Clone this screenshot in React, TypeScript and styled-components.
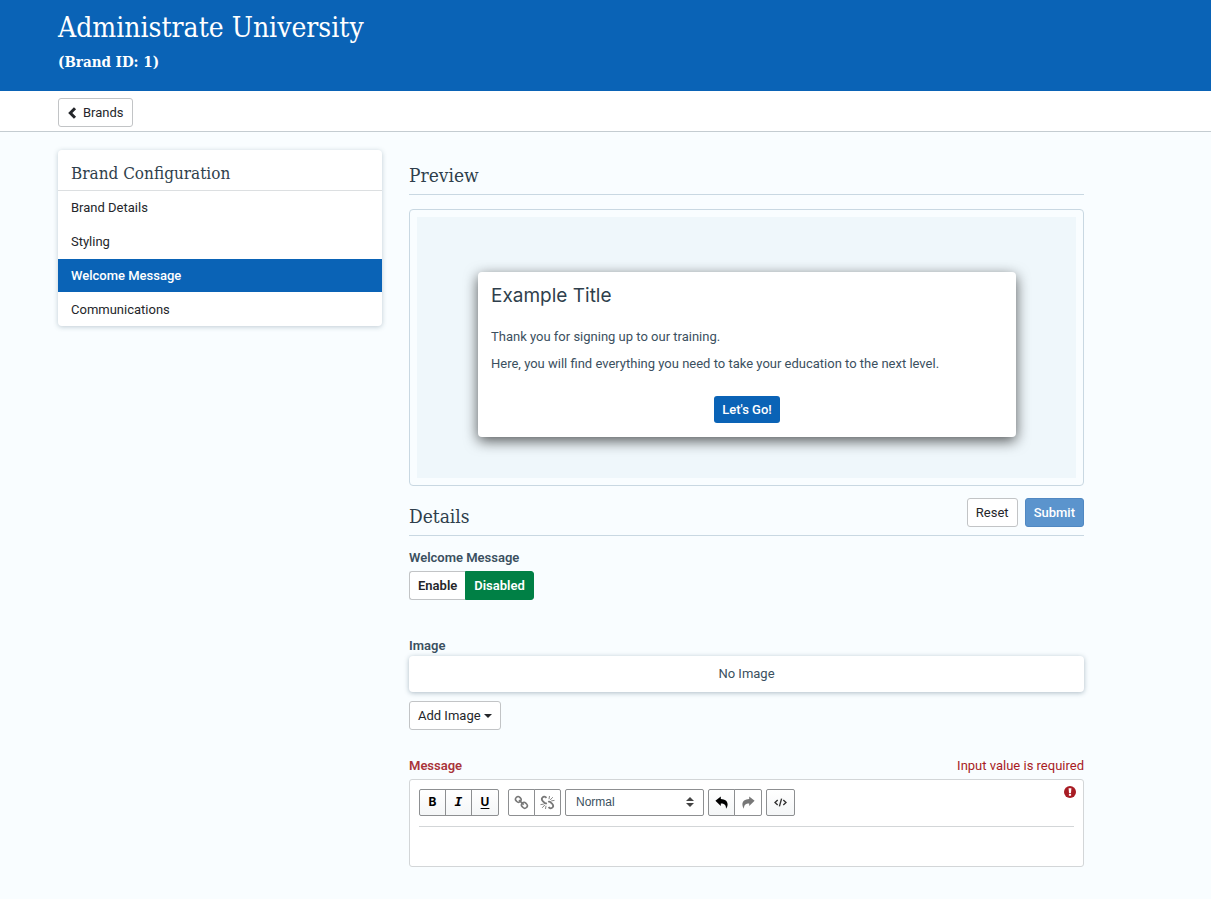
import React, { useState } from "react";
import styled, { createGlobalStyle, css } from "styled-components";

const color = {
  blue: "#0a63b6",
  page: "#f9fdff",
  ink: "#24262a",
  heading: "#2f3f4c",
  text: "#3b5060",
  rule: "#c9d8e2",
  border: "#c2c4c6",
  green: "#008045",
  error: "#a81c24",
};
const sans = `Roboto, "Liberation Sans", sans-serif`;
const slab = `"Roboto Slab", "DejaVu Serif Condensed", "DejaVu Serif", serif`;

const GlobalStyle = createGlobalStyle`
  *, *::before, *::after { box-sizing: border-box; }
  body {
    margin: 0;
    background: ${color.page};
    color: ${color.text};
    font: 13px/20px ${sans};
  }
  h1, h2, h3, p, ul { margin: 0; padding: 0; }
  button, select, textarea { font: inherit; margin: 0; }
`;

const Header = styled.header`
  background: ${color.blue};
  color: #fff;
  padding: 9px 58px 14px;
  font-family: ${slab};
`;
const Title = styled.h1`
  font-size: 28px;
  line-height: 38px;
  font-weight: 300;
`;
const Subtitle = styled.p`
  font-size: 15px;
  line-height: 30px;
  font-weight: 600;
`;
const Crumbs = styled.nav`
  display: flex;
  background: #fff;
  border-bottom: 1px solid #c4ccd1;
  padding: 7px 58px 4px;
`;
const controlLook = css`
  display: inline-flex;
  align-items: center;
  height: 29px;
  padding: 0 8px;
  border: 1px solid ${color.border};
  border-radius: 3px;
  background: #fff;
  color: ${color.ink};
  font-size: 13px;
  cursor: pointer;
`;
const BackLink = styled.a`
  ${controlLook}
  gap: 6px;
  text-decoration: none;
`;
const Button = styled.button<{ $primary?: boolean }>`
  ${controlLook}
  gap: 3px;
  ${(p) =>
    p.$primary &&
    css`
      background: #5b94cd;
      border-color: #5088c2;
      color: #fff;
      font-weight: 500;
    `}
`;
const Layout = styled.main`
  display: grid;
  grid-template-columns: 12fr 25fr;
  gap: 27px;
  align-items: start;
  padding: 18px 127px 32px 58px;
`;
const Sidebar = styled.aside`
  background: #fff;
  border-radius: 4px;
  overflow: hidden;
  box-shadow: 0 1px 5px rgba(60, 90, 110, 0.3);
`;
const SidebarTitle = styled.h2`
  padding: 10px 13px 4px;
  border-bottom: 1px solid #dcdfe1;
  font: 300 17px/26px ${slab};
  color: ${color.heading};
`;
const MenuList = styled.ul`
  display: grid;
  gap: 1px;
  list-style: none;
`;
const MenuLink = styled.a<{ $active?: boolean }>`
  display: block;
  padding: 0 13px;
  line-height: 33px;
  text-decoration: none;
  color: ${(p) => (p.$active ? "#fff" : color.ink)};
  background: ${(p) => (p.$active ? color.blue : "transparent")};
  font-weight: ${(p) => (p.$active ? 500 : 400)};
`;
const Content = styled.div`
  min-width: 0;
`;
const SectionHead = styled.div`
  display: flex;
  justify-content: space-between;
  align-items: flex-start;
  height: 38px;
  border-bottom: 1px solid ${color.rule};
`;
const PreviewHead = styled(SectionHead)`
  margin: 7px 0 14px;
`;
const SectionTitle = styled.h2`
  font: 300 19px/36px ${slab};
  color: ${color.heading};
`;
const Actions = styled.div`
  display: flex;
  gap: 7px;
`;
const PreviewFrame = styled.section`
  border: 1px solid ${color.rule};
  border-radius: 4px;
  padding: 7px;
  margin-bottom: 12px;
`;
const PreviewStage = styled.div`
  background: #eff7fb;
  padding: 55px 60px 41px 61px;
`;
const Dialog = styled.article`
  background: #fff;
  border-radius: 4px;
  padding: 10px 13px 14px;
  box-shadow: 0 4px 14px rgba(0, 0, 0, 0.65);
`;
const DialogTitle = styled.h3`
  font: 400 19px/28px Inter, ${sans};
  color: ${color.heading};
  margin-bottom: 17px;
`;
const DialogText = styled.p`
  margin-bottom: 7px;
`;
const DialogFooter = styled.div`
  display: flex;
  justify-content: center;
  margin-top: 22px;
`;
const GoButton = styled.button`
  height: 27px;
  padding: 0 8px;
  border: 0;
  border-radius: 3px;
  background: ${color.blue};
  color: #fff;
  font-size: 13px;
  font-weight: 500;
`;
const Field = styled.div<{ $space?: number }>`
  display: flex;
  flex-direction: column;
  align-items: flex-start;
  margin-top: ${(p) => p.$space ?? 0}px;
`;
const FieldHead = styled.div`
  display: flex;
  justify-content: space-between;
  width: 100%;
  color: ${color.error};
  margin-bottom: 3px;
`;
const Label = styled.div<{ $error?: boolean }>`
  font-weight: 600;
  color: ${(p) => (p.$error ? "#a9343a" : color.text)};
`;
const Toggle = styled.div`
  display: flex;
  margin-top: 3px;
`;
const ToggleButton = styled.button<{ $on?: boolean }>`
  ${controlLook}
  font-weight: 600;
  ${(p) =>
    p.$on
      ? css`
          background: ${color.green};
          border-color: ${color.green};
          color: #fff;
          border-radius: 0 3px 3px 0;
        `
      : css`
          border-right: 0;
          border-radius: 3px 0 0 3px;
        `}
`;
const ImageBox = styled.div`
  width: 100%;
  background: #fff;
  border-radius: 4px;
  padding: 8px;
  margin-bottom: 9px;
  text-align: center;
  box-shadow: 0 1px 5px rgba(60, 90, 110, 0.4);
`;
const Editor = styled.div`
  position: relative;
  width: 100%;
  background: #fff;
  border: 1px solid #d3d6d8;
  border-radius: 3px;
  padding: 9px;
`;
const Toolbar = styled.div`
  display: flex;
  flex-wrap: wrap;
  gap: 4px;
  padding-bottom: 10px;
  border-bottom: 1px solid #d3d6d8;
`;
const ToolGroup = styled.div<{ $wide?: boolean }>`
  display: flex;
  margin-right: ${(p) => (p.$wide ? 5 : 0)}px;
`;
const Tool = styled.button<{ $wide?: boolean }>`
  display: grid;
  place-items: center;
  width: ${(p) => (p.$wide ? 28 : 27)}px;
  height: 27px;
  padding: 0;
  border: 1px solid #8d8f91;
  background: linear-gradient(#fff, #f4f6f7);
  color: #000;
  &:first-child { border-radius: 2px 0 0 2px; }
  &:last-child { border-radius: 0 2px 2px 0; }
  &:only-child { border-radius: 2px; width: 29px; }
  & + & { margin-left: -1px; }
  &:disabled { background: #fff; color: #777; }
`;
const Letter = styled.span<{ $italic?: boolean; $under?: boolean }>`
  font: ${(p) => (p.$italic ? `italic 700 13px/18px "DejaVu Sans Mono", monospace` : `700 12px/18px Inter, sans-serif`)};
  text-decoration: ${(p) => (p.$under ? "underline" : "none")};
  text-underline-offset: 2px;
  padding-bottom: 2px;
`;
const SelectWrap = styled.div`
  position: relative;
  width: 139px;
`;
const BlockSelect = styled.select`
  appearance: none;
  width: 100%;
  height: 27px;
  padding: 0 24px 2px 10px;
  border: 1px solid #8d8f91;
  border-radius: 2px;
  background: #fff;
  color: ${color.text};
  font: 12px/20px "Liberation Sans", sans-serif;
`;
const SelectArrows = styled.svg`
  position: absolute;
  right: 10px;
  top: 8px;
  pointer-events: none;
`;
const TextArea = styled.textarea`
  display: block;
  width: 100%;
  height: 30px;
  border: 0;
  padding: 5px 0;
  resize: none;
  outline: 0;
  background: transparent;
`;
const ErrorMark = styled.svg`
  position: absolute;
  right: 7px;
  top: 6px;
`;

const ArrowIcon = ({ flip }: { flip?: boolean }) => (
  <svg width="13" height="13" viewBox="0 0 13 13" aria-hidden="true">
    <path
      transform={flip ? "matrix(-1 0 0 1 13 0)" : undefined}
      fill="currentColor"
      d="M.4 4.800 5.800.4v2.500c4.300.1 6.800 2.100 6.800 5.400 0 1.800-.6 3.200-1.600 4.500.2-3.500-1.500-5.100-5.200-5.200v2.300z"
    />
  </svg>
);
const LinkIcon = ({ broken }: { broken?: boolean }) => (
  <svg width="15" height="15" viewBox="0 0 15 15" fill="none" stroke="currentColor" aria-hidden="true">
    {broken ? (
      <>
        <path strokeWidth="1.800" d="M6.500 2.900C5.200 1.400 3.500 1.400 2.500 2.500S1.700 5.100 3 6.400L4.400 7.700C5.200 8.400 6 8.500 6.800 8.100" />
        <path strokeWidth="1.800" d="M8.500 12.100c1.300 1.500 3 1.500 4 .4s.8-2.600-.5-3.900L10.600 7.300C9.800 6.600 9 6.500 8.200 6.900" />
        <path strokeWidth=".9" d="M9 4.200 9.500 1M10.200 5l2.600-2.800M11.200 5.900l3.300-.5M6 10.800 5.500 14M4.800 10l-2.600 2.800M3.800 9.100.5 9.600" />
      </>
    ) : (
      <>
        <rect x="1.500" y="1.900" width="5.600" height="5" rx="2.400" strokeWidth="1.600" transform="rotate(45 4.300 4.400)" />
        <rect x="7.400" y="7.800" width="6" height="5" rx="2.400" strokeWidth="1.600" transform="rotate(45 10.400 10.300)" />
        <path strokeWidth="1.600" d="m5 5.200 4.700 4.400" />
      </>
    )}
  </svg>
);

const menu = ["Brand Details", "Styling", "Welcome Message", "Communications"];

export default function App() {
  const [enabled, setEnabled] = useState(false);
  return (
    <>
      <GlobalStyle />
      <Header>
        <Title>Administrate University</Title>
        <Subtitle>(Brand ID: 1)</Subtitle>
      </Header>
      <Crumbs aria-label="Breadcrumb">
        <BackLink href="#brands">
          <svg width="10" height="12" viewBox="0 0 10 12" aria-hidden="true">
            <path d="M8 1.300 3.300 6 8 10.700" fill="none" stroke="currentColor" strokeWidth="3" />
          </svg>
          Brands
        </BackLink>
      </Crumbs>
      <Layout>
        <Sidebar>
          <SidebarTitle>Brand Configuration</SidebarTitle>
          <MenuList>
            {menu.map((item) => (
              <li key={item}>
                <MenuLink href="#section" $active={item === "Welcome Message"}>
                  {item}
                </MenuLink>
              </li>
            ))}
          </MenuList>
        </Sidebar>
        <Content>
          <PreviewHead>
            <SectionTitle>Preview</SectionTitle>
          </PreviewHead>
          <PreviewFrame>
            <PreviewStage>
              <Dialog>
                <DialogTitle>Example Title</DialogTitle>
                <DialogText>Thank you for signing up to our training.</DialogText>
                <DialogText>
                  Here, you will find everything you need to take your education to the next level.
                </DialogText>
                <DialogFooter>
                  <GoButton type="button">Let's Go!</GoButton>
                </DialogFooter>
              </Dialog>
            </PreviewStage>
          </PreviewFrame>
          <SectionHead>
            <SectionTitle>Details</SectionTitle>
            <Actions>
              <Button type="reset">Reset</Button>
              <Button type="submit" $primary>
                Submit
              </Button>
            </Actions>
          </SectionHead>
          <Field $space={12}>
            <Label id="welcome-label">Welcome Message</Label>
            <Toggle role="group" aria-labelledby="welcome-label">
              <ToggleButton type="button" $on={enabled} onClick={() => setEnabled(true)}>
                Enable
              </ToggleButton>
              <ToggleButton type="button" $on={!enabled} onClick={() => setEnabled(false)}>
                Disabled
              </ToggleButton>
            </Toggle>
          </Field>
          <Field $space={36}>
            <Label>Image</Label>
            <ImageBox>No Image</ImageBox>
            <Button type="button">
              Add Image
              <svg width="8" height="4" viewBox="0 0 8 4" aria-hidden="true">
                <path d="M0 0h8L4 4z" fill="currentColor" />
              </svg>
            </Button>
          </Field>
          <Field $space={26}>
            <FieldHead>
              <Label as="label" htmlFor="message" $error>
                Message
              </Label>
              <span>Input value is required</span>
            </FieldHead>
            <Editor>
              <Toolbar>
                <ToolGroup $wide>
                  <Tool type="button" aria-label="Bold"><Letter>B</Letter></Tool>
                  <Tool type="button" aria-label="Italic"><Letter $italic>I</Letter></Tool>
                  <Tool type="button" aria-label="Underline" $wide><Letter $under>U</Letter></Tool>
                </ToolGroup>
                <ToolGroup>
                  <Tool type="button" aria-label="Link" disabled><LinkIcon /></Tool>
                  <Tool type="button" aria-label="Remove link" disabled><LinkIcon broken /></Tool>
                </ToolGroup>
                <SelectWrap>
                  <BlockSelect aria-label="Text style" defaultValue="Normal">
                    <option>Normal</option>
                  </BlockSelect>
                  <SelectArrows width="8" height="10" viewBox="0 0 8 10" aria-hidden="true">
                    <path d="M4 0 8 4H0zM4 10 0 6h8z" fill="#444" />
                  </SelectArrows>
                </SelectWrap>
                <ToolGroup>
                  <Tool type="button" aria-label="Undo"><ArrowIcon /></Tool>
                  <Tool type="button" aria-label="Redo" $wide disabled><ArrowIcon flip /></Tool>
                </ToolGroup>
                <ToolGroup>
                  <Tool type="button" aria-label="Source">
                    <svg width="13" height="9" viewBox="0 0 13 9" fill="none" stroke="#333" strokeWidth="1.400" aria-hidden="true">
                      <path d="M3.700 2 1 4.500 3.700 7M9.300 2 12 4.500 9.300 7M7.600.6 5.400 8.400" />
                    </svg>
                  </Tool>
                </ToolGroup>
              </Toolbar>
              <TextArea id="message" />
              <ErrorMark width="12" height="12" viewBox="0 0 12 12" aria-hidden="true">
                <circle cx="6" cy="6" r="6" fill={color.error} />
                <path d="M4.600 2.200h2.800L7 7H5zM4.900 7.700h2.200v2.100H4.900z" fill="#fff" />
              </ErrorMark>
            </Editor>
          </Field>
        </Content>
      </Layout>
    </>
  );
}
